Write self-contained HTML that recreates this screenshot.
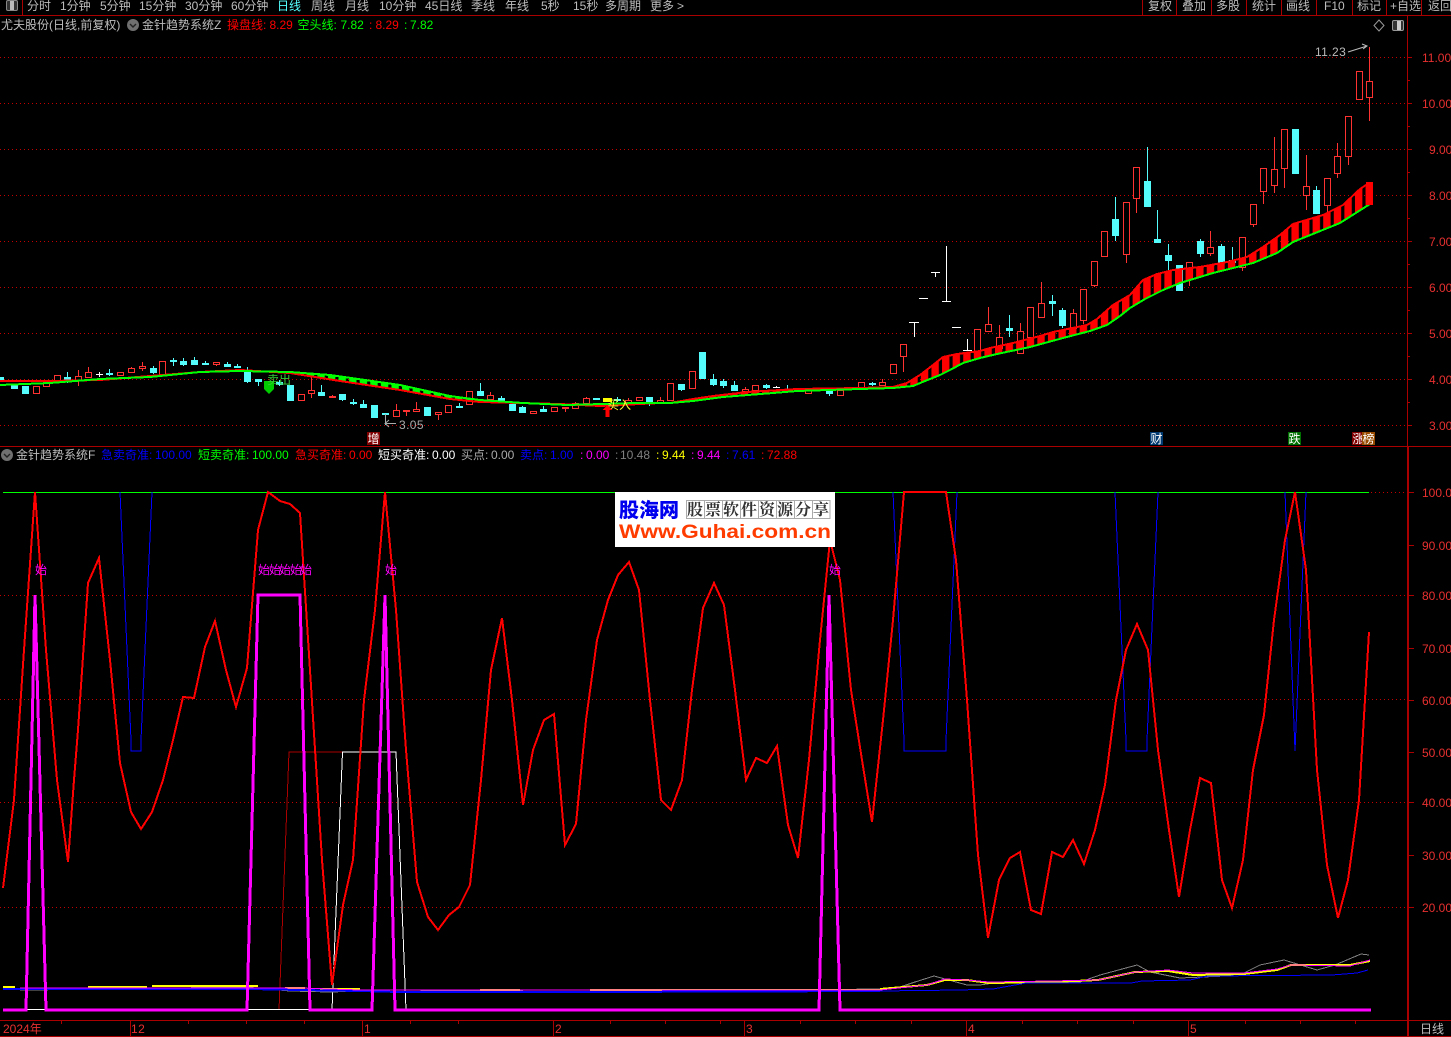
<!DOCTYPE html>
<html><head><meta charset="utf-8"><style>
html,body{margin:0;padding:0;background:#000;width:1451px;height:1037px;overflow:hidden}
svg{display:block}
text{font-family:"Liberation Sans","WenQuanYi Zen Hei","Noto Sans CJK SC",sans-serif;font-size:12px;white-space:pre}
.g{fill:#bdbdbd}
.r{fill:#ff3232}
.m{fill:#ff00ff}
.ax{fill:#e83030;font-size:12px}
.n{letter-spacing:.4px}
</style></head><body>
<svg width="1451" height="1037" viewBox="0 0 1451 1037" xmlns="http://www.w3.org/2000/svg">
<defs>
<pattern id="pr" patternUnits="userSpaceOnUse" x="-0.3" y="0" width="10.588" height="20"><rect width="7.4" height="20" fill="#ff0000"/></pattern>
<pattern id="pg" patternUnits="userSpaceOnUse" x="-0.3" y="0" width="10.588" height="20"><rect width="7.4" height="20" fill="#00ff00"/></pattern>
</defs>
<rect width="1451" height="1037" fill="#000"/>

<!-- frame -->
<g shape-rendering="crispEdges" stroke="#aa0000" fill="none">
<path d="M0 15.5H1451M0 446.5H1451M0 1020.5H1451M0 1036.5H1451"/>
<path d="M22.5 0V15M1142.5 0V15M1176.5 0V15M1211.5 0V15M1246.5 0V15M1281.5 0V15M1316.5 0V15M1352.5 0V15M1386.5 0V15M1421.5 0V15"/>
<path d="M1407.5 15V446"/>
<path d="M1408 446V1037" stroke-width="2"/>
<path d="M130.5 1021V1036M362.5 1021V1036M553.5 1021V1036M744.5 1021V1036M966.5 1021V1036M1188.5 1021V1036"/>
<path d="M61.5 1021V1024M188.5 1021V1024M246.5 1021V1024M304.5 1021V1024M410.5 1021V1024M458.5 1021V1024M610.5 1021V1024M665.5 1021V1024M720.5 1021V1024M800.5 1021V1024M855.5 1021V1024M911.5 1021V1024M1022.5 1021V1024M1077.5 1021V1024M1133.5 1021V1024M1245.5 1021V1024M1300.5 1021V1024M1355.5 1021V1024"/>
<path d="M1407 57.5H1412M1407 103.5H1412M1407 149.5H1412M1407 195.5H1412M1407 241.5H1412M1407 287.5H1412M1407 333.5H1412M1407 379.5H1412M1407 425.5H1412M1407 80.5H1410M1407 126.5H1410M1407 172.5H1410M1407 218.5H1410M1407 264.5H1410M1407 310.5H1410M1407 356.5H1410M1407 402.5H1410"/>
<path d="M1408 492.5H1414M1408 545.5H1414M1408 595.5H1414M1408 648.5H1414M1408 700.5H1414M1408 752.5H1414M1408 802.5H1414M1408 855.5H1414M1408 907.5H1414"/>
<path stroke="#c40000" stroke-dasharray="1 3" d="M0 57.5H1407M0 103.5H1407M0 149.5H1407M0 195.5H1407M0 241.5H1407M0 287.5H1407M0 333.5H1407M0 379.5H1407M0 425.5H1407"/>
<path stroke="#c40000" stroke-dasharray="1 3" d="M1371 492.5H1407M0 595.5H1407M0 699.5H1407M0 802.5H1407M0 907.5H1407"/>
</g>

<!-- top tabs -->
<rect x="6.5" y="0.5" width="11" height="10" rx="1.5" fill="#333" stroke="#888"/>
<rect x="10" y="1" width="4" height="9" fill="#bbb"/>
<g class="g">
<text x="27" y="10">分时</text><text x="60" y="10">1分钟</text><text x="100" y="10">5分钟</text><text x="139" y="10">15分钟</text><text x="185" y="10">30分钟</text><text x="231" y="10">60分钟</text><text x="277" y="10" style="fill:#55ffff">日线</text><text x="311" y="10">周线</text><text x="345" y="10">月线</text><text x="379" y="10">10分钟</text><text x="425" y="10">45日线</text><text x="471" y="10">季线</text><text x="505" y="10">年线</text><text x="541" y="10">5秒</text><text x="573" y="10">15秒</text><text x="605" y="10">多周期</text><text x="650" y="10">更多</text><text x="677" y="10">&gt;</text>
<text x="1148" y="10">复权</text><text x="1182" y="10">叠加</text><text x="1216" y="10">多股</text><text x="1252" y="10">统计</text><text x="1286" y="10">画线</text><text x="1324" y="10">F10</text><text x="1357" y="10">标记</text><text x="1390" y="10">+自选</text><text x="1428" y="10">返回</text>
</g>

<!-- info line 1 -->
<text class="g" x="1" y="29">尤夫股份(日线,前复权)</text>
<circle cx="133" cy="25" r="6" fill="#707070"/><path d="M130 24l3 3 3-3" fill="none" stroke="#222" stroke-width="1.4"/>
<text class="g" x="142" y="29">金针趋势系统Z</text>
<text x="227" y="29" fill="#f00">操盘线:</text><text x="269.500" y="29" fill="#f00">8.29</text><text x="369" y="29" fill="#f00">:</text><text x="375.500" y="29" fill="#f00">8.29</text>
<text x="297.500" y="29" fill="#0f0">空头线:</text><text x="340.500" y="29" fill="#0f0">7.82</text><text x="404" y="29" fill="#0f0">:</text><text x="410" y="29" fill="#0f0">7.82</text>
<path d="M1379 20l5 5.500-5 5.500-5-5.500z" fill="none" stroke="#999"/>
<rect x="1392.500" y="20.500" width="11" height="10" rx="1.500" fill="#333" stroke="#999"/><rect x="1397" y="21" width="4" height="9" fill="#ccc"/>

<!-- axis labels -->
<g class="ax">
<text x="1422" y="62" class="ax">11.00</text><text x="1422" y="108" class="ax">10.00</text><text x="1429" y="154" class="ax">9.00</text><text x="1429" y="200" class="ax">8.00</text><text x="1429" y="246" class="ax">7.00</text><text x="1429" y="292" class="ax">6.00</text><text x="1429" y="338" class="ax">5.00</text><text x="1429" y="384" class="ax">4.00</text><text x="1429" y="430" class="ax">3.00</text>
<text x="1422" y="497" class="ax">100.0</text><text x="1422" y="550" class="ax">90.00</text><text x="1422" y="600" class="ax">80.00</text><text x="1422" y="653" class="ax">70.00</text><text x="1422" y="705" class="ax">60.00</text><text x="1422" y="757" class="ax">50.00</text><text x="1422" y="807" class="ax">40.00</text><text x="1422" y="860" class="ax">30.00</text><text x="1422" y="912" class="ax">20.00</text>
<text x="3" y="1033" class="ax">2024年</text><text x="131" y="1033" class="ax n">12</text><text x="364" y="1033" class="ax">1</text><text x="555" y="1033" class="ax">2</text><text x="746" y="1033" class="ax">3</text><text x="968" y="1033" class="ax">4</text><text x="1190" y="1033" class="ax">5</text>
</g>
<text class="g" x="1420" y="1033">日线</text>

<!-- candles -->
<g shape-rendering="crispEdges">
<!-- red wicks -->
<path fill="none" stroke="#ff3232" d="M78.5 370V386M88.5 367V372M120.5 372V376M131.5 367V372M142.5 362V371M216.5 362V366M311.5 377V398M332.5 395V398M396.5 404V410M406.5 411V416M416.5 402V409M438.5 414V420M490.5 392V400M565.5 408V412M575.5 402V403M586.5 397V398M628.5 398V400M660.5 397V400M745.5 387V389M882.5 379V382M903.5 356V372M988.5 307V332M999.5 325V337M1020.5 323V331M1041.5 282V318M1073.5 309V313M1083.5 320V324M1094.5 285V287M1126.5 254V263M1136.5 198V213M1189.5 279V286M1210.5 231V256M1242.5 267V271M1253.5 224V227M1263.5 191V204M1274.5 137V193M1284.5 168V188M1306.5 155V210M1327.5 205V212M1337.5 143V178M1348.5 156V165M1369.5 47V121"/>
<!-- red bodies -->
<path fill="#000" stroke="#ff3232" d="M33.5 386.5h6V393.5h-6zM43.5 382.5h6V386.5h-6zM54.5 375.5h6V380.5h-6zM75.5 376.5h6V380.5h-6zM85.5 372.5h6V377.5h-6zM117.5 372.5h6V375.5h-6zM128.5 368.5h6V372.5h-6zM139.5 366.5h6V368.5h-6zM159.5 361.5h6V374.5h-6zM213.5 362.5h6V364.5h-6zM298.5 394.5h6V400.5h-6zM308.5 390.5h6V393.5h-6zM329.5 396.5h6V397.5h-6zM393.5 410.5h6V416.5h-6zM403.5 410.5h6V411.5h-6zM413.5 409.5h6V411.5h-6zM435.5 412.5h6V414.5h-6zM445.5 405.5h6V412.5h-6zM466.5 391.5h6V404.5h-6zM487.5 395.5h6V399.5h-6zM530.5 411.5h6V413.5h-6zM551.5 407.5h6V411.5h-6zM562.5 407.5h6V408.5h-6zM572.5 403.5h6V408.5h-6zM583.5 398.5h6V403.5h-6zM625.5 400.5h6V402.5h-6zM636.5 397.5h6V400.5h-6zM657.5 400.5h6V402.5h-6zM667.5 383.5h6V400.5h-6zM689.5 371.5h6V388.5h-6zM742.5 389.5h6V391.5h-6zM752.5 385.5h6V390.5h-6zM805.5 388.5h6V393.5h-6zM837.5 390.5h6V395.5h-6zM858.5 382.5h6V389.5h-6zM879.5 382.5h6V385.5h-6zM890.5 364.5h6V373.5h-6zM900.5 344.5h6V356.5h-6zM974.5 329.5h6V353.5h-6zM985.5 324.5h6V331.5h-6zM996.5 337.5h6V348.5h-6zM1017.5 331.5h6V353.5h-6zM1027.5 307.5h6V337.5h-6zM1038.5 303.5h6V317.5h-6zM1070.5 313.5h6V328.5h-6zM1080.5 289.5h6V320.5h-6zM1091.5 261.5h6V285.5h-6zM1101.5 231.5h6V256.5h-6zM1123.5 202.5h6V254.5h-6zM1133.5 167.5h6V198.5h-6zM1186.5 262.5h6V279.5h-6zM1207.5 247.5h6V253.5h-6zM1239.5 237.5h6V267.5h-6zM1250.5 204.5h6V224.5h-6zM1260.5 168.5h6V191.5h-6zM1271.5 169.5h6V185.5h-6zM1281.5 129.5h6V168.5h-6zM1303.5 186.5h6V195.5h-6zM1324.5 178.5h6V205.5h-6zM1334.5 156.5h6V173.5h-6zM1345.5 116.5h6V156.5h-6zM1356.5 71.5h6V99.5h-6zM1366.5 81.5h6V97.5h-6z"/>
<!-- cyan -->
<path fill="#54fcfc" stroke="#54fcfc" d="M67.5 372V383M109.5 369V376M153.5 366V374M173.5 358V366M183.5 358V366M194.5 357V365M205.5 361V365M227.5 362V366M237.5 364V368M247.5 367V383M258.5 381V386M279.5 380V386M290.5 400V401M321.5 385V396M342.5 399V401M353.5 399V405M363.5 400V408M385.5 414V425M459.5 403V408M480.5 383V391M501.5 396V398M512.5 410V411M522.5 406V407M543.5 406V409M596.5 399V400M617.5 397V402M649.5 402V406M681.5 389V391M702.5 378V379M713.5 374V386M723.5 379V388M734.5 381V385M766.5 384V389M787.5 385V389M829.5 393V396M872.5 382V386M1009.5 315V337M1052.5 295V316M1062.5 308V328M1115.5 197V241M1147.5 147V181M1157.5 210V239M1168.5 244V270M1200.5 239V257M1221.5 244V246M1232.5 247V260M1316.5 186V214M0.5 377.5h3V381.5h-3zM11.5 385.5h6V388.5h-6zM22.5 386.5h6V393.5h-6zM64.5 377.5h6V379.5h-6zM106.5 373.5h6V374.5h-6zM150.5 368.5h6V372.5h-6zM170.5 360.5h6V361.5h-6zM180.5 361.5h6V364.5h-6zM191.5 360.5h6V364.5h-6zM202.5 363.5h6V364.5h-6zM224.5 364.5h6V366.5h-6zM234.5 366.5h6V367.5h-6zM244.5 372.5h6V381.5h-6zM255.5 379.5h6V381.5h-6zM276.5 382.5h6V384.5h-6zM287.5 385.5h6V400.5h-6zM318.5 392.5h6V395.5h-6zM339.5 394.5h6V399.5h-6zM350.5 402.5h6V403.5h-6zM360.5 404.5h6V407.5h-6zM371.5 405.5h6V417.5h-6zM382.5 413.5h6V414.5h-6zM424.5 407.5h6V415.5h-6zM456.5 406.5h6V407.5h-6zM477.5 391.5h6V395.5h-6zM498.5 398.5h6V400.5h-6zM509.5 404.5h6V410.5h-6zM519.5 407.5h6V412.5h-6zM540.5 409.5h6V411.5h-6zM593.5 398.5h6V399.5h-6zM614.5 399.5h6V400.5h-6zM646.5 397.5h6V402.5h-6zM678.5 384.5h6V389.5h-6zM699.5 352.5h6V378.5h-6zM710.5 379.5h6V384.5h-6zM720.5 381.5h6V385.5h-6zM731.5 385.5h6V390.5h-6zM763.5 385.5h6V387.5h-6zM784.5 389.5h6V390.5h-6zM826.5 391.5h6V393.5h-6zM869.5 383.5h6V384.5h-6zM1006.5 328.5h6V330.5h-6zM1049.5 301.5h6V303.5h-6zM1059.5 310.5h6V325.5h-6zM1112.5 219.5h6V235.5h-6zM1144.5 181.5h6V206.5h-6zM1154.5 239.5h6V242.5h-6zM1165.5 255.5h6V260.5h-6zM1176.5 265.5h6V290.5h-6zM1197.5 241.5h6V253.5h-6zM1218.5 246.5h6V262.5h-6zM1229.5 260.5h6V262.5h-6zM1292.5 129.5h6V173.5h-6zM1313.5 190.5h6V213.5h-6z"/>
<!-- white -->
<path fill="none" stroke="#fff" d="M99.5 372V377M96 374.5h7M776.5 386V388M773 387.5h7M914.5 322V337M909 322.5h10M919 298.5h9M935.5 272V277M931 272.5h9M946.5 246V301M942 301.5h9M952 327.5h9M967.5 339V350M963 350.5h9"/>
</g>

<!-- bands -->
<g shape-rendering="crispEdges">
<polygon fill="url(#pg)" points="270,372 290,372 330,375 400,385 450,396 480,400 480,402 450,399 400,390 340,381 290,373 270,372"/>
<polygon fill="url(#pr)" points="670,403 693,399 713,396 747,392 797,389 860,388 893,387 907,383 920,375 933,365 943,357 957,354 980,351 990,348 1013,343 1040,336 1053,332 1087,325 1097,319 1113,305 1130,295 1143,280 1157,274 1173,270 1200,267 1227,262 1247,257 1263,247 1280,235 1293,224 1323,215 1343,205 1360,189 1369,183 1370,204 1340,223 1293,242 1277,253 1253,263 1213,273 1180,283 1163,290 1145,299 1130,308 1120,316 1107,325 1090,331 1063,338 1030,347 997,354 980,358 963,363 950,370 940,375 925,381 913,386 893,388 860,389 797,391 773,393 723,397 693,401"/>
<polyline fill="none" stroke="#ff0000" stroke-width="2" points="0,381 50,381 100,380 150,376 200,372 240,370 290,373 340,381 400,390 450,399 480,402 560,404 600,406 660,403 670,403 693,399 713,396 747,392 797,389 860,388 893,387 907,383 920,375 933,365 943,357 957,354 980,351 990,348 1013,343 1040,336 1053,332 1087,325 1097,319 1113,305 1130,295 1143,280 1157,274 1173,270 1200,267 1227,262 1247,257 1263,247 1280,235 1293,224 1323,215 1343,205 1360,189 1369,183"/>
<polyline fill="none" stroke="#00ff00" stroke-width="2" points="0,385 50,383 100,379 150,377 200,372 240,371 290,372 330,375 400,385 450,396 480,400 523,403 567,405 637,403 670,403 693,401 723,397 773,393 797,391 860,389 893,388 913,386 925,381 940,375 950,370 963,363 980,358 997,354 1030,347 1063,338 1090,331 1107,325 1120,316 1130,308 1145,299 1163,290 1180,283 1213,273 1253,263 1277,253 1293,242 1340,223 1370,204"/>
<rect x="1366" y="182" width="7" height="23" fill="#f00"/>
</g>

<!-- markers -->
<path d="M264 381h10v8l-5 5-5-5z" fill="#0c0"/>
<text x="267" y="384" fill="#33cc33">卖出</text>
<text x="607" y="409" fill="#ffff33">买入</text>
<rect x="603" y="398" width="9" height="4" fill="#ff0"/>
<path d="M607.500 405l5 5h-3v7h-4v-7h-3z" fill="#f00"/>
<text class="g n" x="399" y="429" style="fill:#aaa">3.05</text>
<path d="M396 423.500H386M389 420l-4 3.500 4 3.500M385.500 414V424" fill="none" stroke="#aaa"/>
<text class="g n" x="1315" y="56" style="fill:#bbb">11.23</text>
<path d="M1348 52l19-6M1362 44l5 2-4 3" fill="none" stroke="#bbb"/>
<rect x="367" y="432" width="13" height="13" fill="#800000"/><text x="367.500" y="443" fill="#fff">增</text>
<rect x="1150" y="432" width="13" height="13" fill="#003a70"/><text x="1150.500" y="443" fill="#fff">财</text>
<rect x="1288" y="432" width="13" height="13" fill="#007000"/><text x="1288.500" y="443" fill="#fff">跌</text>
<rect x="1352" y="432" width="13" height="13" fill="#800000"/><text x="1352.500" y="443" fill="#fff">涨</text>
<rect x="1362" y="432" width="13" height="13" fill="#964b00"/><text x="1362.500" y="443" fill="#fff">榜</text>

<!-- info line 2 -->
<circle cx="7" cy="455" r="6" fill="#707070"/><path d="M4 454l3 3 3-3" fill="none" stroke="#222" stroke-width="1.4"/>
<text class="g" x="16" y="459">金针趋势系统F</text>
<text x="101" y="459" fill="#0000ff">急卖奇准:</text><text x="155" y="459" fill="#0000ff">100.00</text>
<text x="198" y="459" fill="#00ff00">短卖奇准:</text><text x="252" y="459" fill="#00ff00">100.00</text>
<text x="295" y="459" fill="#ff0000">急买奇准:</text><text x="349" y="459" fill="#ff0000">0.00</text>
<text x="378" y="459" fill="#ffffff">短买奇准:</text><text x="432" y="459" fill="#ffffff">0.00</text>
<text x="461" y="459" fill="#aaaaaa">买点:</text><text x="491" y="459" fill="#aaaaaa">0.00</text>
<text x="520" y="459" fill="#0000ff">卖点:</text><text x="550" y="459" fill="#0000ff">1.00</text>
<text x="580" y="459" fill="#ff00ff">:</text><text x="586" y="459" fill="#ff00ff">0.00</text>
<text x="615" y="459" fill="#808080">:</text><text x="620" y="459" fill="#808080">10.48</text>
<text x="656" y="459" fill="#ffff00">:</text><text x="662" y="459" fill="#ffff00">9.44</text>
<text x="691" y="459" fill="#ff00ff">:</text><text x="697" y="459" fill="#ff00ff">9.44</text>
<text x="726" y="459" fill="#0000ff">:</text><text x="732" y="459" fill="#0000ff">7.61</text>
<text x="761" y="459" fill="#ff0000">:</text><text x="767" y="459" fill="#ff0000">72.88</text>

<!-- indicator panel -->
<g shape-rendering="crispEdges" fill="none">
<path d="M3 492.500H1369" stroke="#00ff00"/>
<path stroke="#0000ff" d="M120 492L131 740V751H141V740L152 492M893 492L904 740V751H946V740L957 492M1115 492L1126 740V751H1147V740L1158 492M1285 492L1295 751L1306 492"/>
<path stroke="#aa0000" d="M279 1010L289 752H342"/>
<path stroke="#fff" d="M25 1009.500H46M248 1009.500H310M332 1010L342.500 752H396L406 1010"/>
<!-- small lines bottom -->
<polyline stroke="#808080" points="20,990 30,990 245,987 290,991 330,992 395,990 600,992 880,989 900,987 915,982 934,976 945,979 967,985 980,985 1000,982 1045,982 1080,982 1100,975 1137,965 1150,972 1180,978 1226,976 1244,973 1260,965 1284,960 1317,970 1335,965 1361,954 1369,955"/>
<path stroke="#ffff00" stroke-width="2" d="M3 987H15M88 987H147M152 986H258M285 988H305M320 989H360M480 990H520M590 990H880"/>
<polyline stroke="#ffff00" stroke-width="2" points="880,989 927,985 945,980 967,980 989,983 1051,982 1098,980 1135,972 1168,971 1193,975 1244,974 1277,970 1291,965 1350,965 1370,961"/>
<polyline stroke="#0000ff" stroke-width="2" points="3,989 250,989 300,990 360,991 400,992 590,992 880,991"/>
<polyline stroke="#0000ff" points="880,991 960,990 993,989 1026,983 1131,983 1142,981 1190,980 1208,976 1332,975 1357,973 1368,970"/>
<polyline stroke="#ff00ff" points="20,988 300,988 360,990 395,990 880,990 927,985 945,979 967,980 989,982 1051,981 1098,980 1135,972 1168,970 1193,973 1244,973 1277,969 1291,965 1350,966 1370,960"/>
<!-- red oscillator -->
<polyline stroke="#ff0000" stroke-width="2" points="3,888 14,800 24,650 35,492 46,650 57,780 68,862 74,780 78,730 88,583 99,558 110,660 120,763 131,812 141,829 152,812 163,780 173,740 183,697 194,698 205,647 215,621 226,670 236,707 247,668 258,530 268,492 280,501 290,504 300,513 311,686 322,860 332,985 343,905 353,860 364,700 375,610 385,492 396,610 406,750 417,882 428,917 438,930 449,915 459,907 470,885 481,780 491,670 502,618 512,700 523,805 533,750 544,720 554,714 565,845 576,824 586,720 597,640 608,600 618,575 629,562 639,590 650,700 661,800 671,810 682,780 692,690 703,608 714,583 724,605 735,690 746,780 756,758 767,763 777,746 788,825 798,858 809,760 820,640 830,540 840,580 851,690 862,760 872,822 883,720 893,620 904,492 946,492 956,560 967,700 978,855 988,938 999,880 1010,858 1020,852 1031,910 1041,914 1052,852 1063,857 1073,840 1084,864 1095,830 1105,785 1116,700 1126,650 1137,624 1148,650 1158,750 1169,830 1179,897 1190,830 1200,778 1211,783 1222,880 1232,908 1243,860 1253,770 1264,715 1274,620 1285,540 1295,492 1306,570 1317,770 1327,865 1338,918 1348,880 1359,800 1369,632"/>
<!-- magenta -->
<polyline stroke="#ff00ff" stroke-width="3" points="3,1010 26,1010 35,595 46,1010 247,1010 258,595 300,595 310,1010 372,1010 385,595 395,1010 819,1010 829,595 840,1010 1371,1010" stroke-linejoin="miter"/>
</g>
<g class="m">
<text x="35" y="574" class="m">始</text>
<text x="258" y="574" class="m">始</text><text x="269" y="574" class="m">始</text><text x="279" y="574" class="m">始</text><text x="290" y="574" class="m">始</text><text x="300" y="574" class="m">始</text>
<text x="385" y="574" class="m">始</text>
<text x="829" y="574" class="m">始</text>
</g>

<!-- watermark -->
<rect x="615" y="492" width="220" height="55" fill="#fff"/>
<text x="619" y="517" style="font-size:20px;font-weight:900;font-family:'Noto Sans CJK SC',sans-serif" fill="#0000ee" textLength="60" lengthAdjust="spacingAndGlyphs">股海网</text>
<path fill="none" stroke="#aaa" shape-rendering="crispEdges" d="M686.500 500.500H830V518.500H686.500ZM704.500 500V518M722.500 500V518M740.500 500V518M758.500 500V518M776.500 500V518M794.500 500V518M812.500 500V518"/>
<g fill="#333">
<text x="687" y="515" style="font-size:16px;font-family:'Noto Serif CJK SC',serif;font-weight:bold">股</text><text x="705" y="515" style="font-size:16px;font-family:'Noto Serif CJK SC',serif;font-weight:bold">票</text><text x="723" y="515" style="font-size:16px;font-family:'Noto Serif CJK SC',serif;font-weight:bold">软</text><text x="741" y="515" style="font-size:16px;font-family:'Noto Serif CJK SC',serif;font-weight:bold">件</text><text x="759" y="515" style="font-size:16px;font-family:'Noto Serif CJK SC',serif;font-weight:bold">资</text><text x="777" y="515" style="font-size:16px;font-family:'Noto Serif CJK SC',serif;font-weight:bold">源</text><text x="795" y="515" style="font-size:16px;font-family:'Noto Serif CJK SC',serif;font-weight:bold">分</text><text x="813" y="515" style="font-size:16px;font-family:'Noto Serif CJK SC',serif;font-weight:bold">享</text>
</g>
<text x="619" y="538" style="font-size:19px;font-weight:bold" fill="#ff3c00" textLength="212" lengthAdjust="spacingAndGlyphs">Www.Guhai.com.cn</text>
</svg>
</body></html>
